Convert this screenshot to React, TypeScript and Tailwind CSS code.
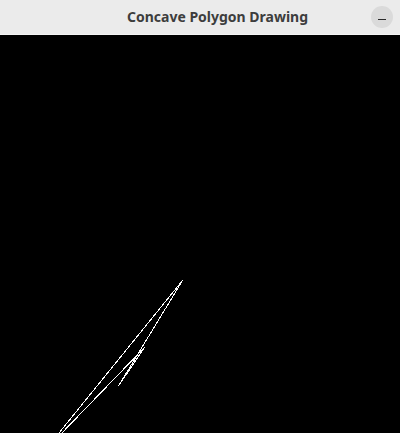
import React from "react";

export default function App() {
  return (
    <div className="w-[400px] h-[433px] flex flex-col bg-black overflow-hidden">
      <div className="h-[35px] shrink-0 flex items-center pl-[64px] pr-[7px] bg-[#ebebeb] border-b border-[#f4f4f4]">
        <span
          className="flex-1 text-center text-[14px] font-bold text-[#3d3d3d] leading-none"
          style={{ fontFamily: '"Noto Sans", "DejaVu Sans", sans-serif' }}
        >
          Concave Polygon Drawing
        </span>
        <div className="w-[22px] h-[22px] rounded-full bg-[#dadada] flex items-center justify-center">
          <div className="w-[8px] h-px bg-[#2a2a2a] mt-[4px]" />
        </div>
      </div>
      <div className="flex-1 relative">
        <svg width="400" height="398" viewBox="0 0 400 398" className="block">
          <polyline
            points="53.3,405 182.5,245.5 118.5,351 144.5,312.5 55.1,405"
            fill="none"
            stroke="white"
            strokeWidth="1"
            shapeRendering="crispEdges"
          />
        </svg>
      </div>
    </div>
  );
}
